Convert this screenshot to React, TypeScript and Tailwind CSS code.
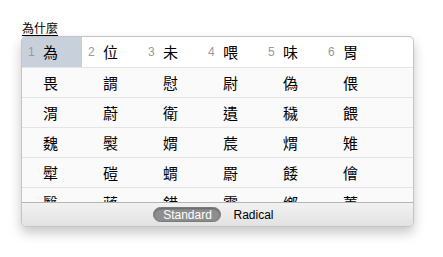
import React from "react";

const top = ["為", "位", "未", "喂", "味", "胃"];
const rows = [
  ["畏", "謂", "慰", "尉", "偽", "偎"],
  ["渭", "蔚", "衛", "遺", "穢", "餵"],
  ["魏", "褽", "媦", "莀", "煟", "雉"],
  ["犚", "磑", "蝟", "罻", "餧", "儈"],
  ["醫", "蔣", "錯", "霉", "鄉", "菁"],
];

const cjk = { fontFamily: '"Noto Sans CJK TC", "Noto Sans CJK SC", sans-serif' };
const latin = { fontFamily: '"Liberation Sans", Arial, sans-serif' };

export default function App() {
  return (
    <div className="w-[443px] h-[257px] bg-white relative overflow-hidden">
      <div className="pt-[15px] pl-[22px] h-[36px]">
        <span className="text-[12px] leading-[15px] text-black underline underline-offset-2" style={cjk}>
          為什麼
        </span>
      </div>
      <div className="ml-[21px] w-[393px] h-[191px] border border-[#c4c4c4] rounded-[5px] bg-white overflow-hidden flex flex-col shadow-[0_6px_12px_rgba(0,0,0,0.22)]">
        <div className="h-[30px] flex shrink-0">
          {top.map((c, i) => (
            <div
              key={i}
              className={`w-[60px] h-[30px] flex items-center ${i === 0 ? "bg-[#c8d0dc]" : ""}`}
            >
              <span className="w-[21px] pl-[6px] text-[12px] text-[#999999]" style={latin}>
                {i + 1}
              </span>
              <span className="text-[15px] leading-[20px] text-black" style={cjk}>
                {c}
              </span>
            </div>
          ))}
        </div>
        <div className="h-[135px] overflow-hidden bg-[#fafafa] shrink-0">
          {rows.map((r, ri) => (
            <div key={ri} className="h-[30px] border-t border-[#e4e4e4] flex">
              {r.map((c, i) => (
                <div key={i} className="w-[60px] h-[29px] flex items-center pl-[21px]">
                  <span className="text-[15px] leading-[20px] text-black" style={cjk}>
                    {c}
                  </span>
                </div>
              ))}
            </div>
          ))}
        </div>
        <div className="flex-1 border-t border-[#b4b4b4] bg-gradient-to-b from-[#f2f2f2] to-[#e2e2e2] flex items-center justify-center gap-[12px] pr-[8px]">
          <div
            className="h-[15px] w-[68px] rounded-full bg-[#8e8e8e] border border-[#7a7a7a] flex items-center justify-center text-white text-[12px] leading-[14px] shadow-[inset_0_1px_2px_rgba(0,0,0,0.3)]"
            style={latin}
          >
            Standard
          </div>
          <div className="text-[12px] leading-[14px] text-black" style={latin}>
            Radical
          </div>
        </div>
      </div>
    </div>
  );
}
